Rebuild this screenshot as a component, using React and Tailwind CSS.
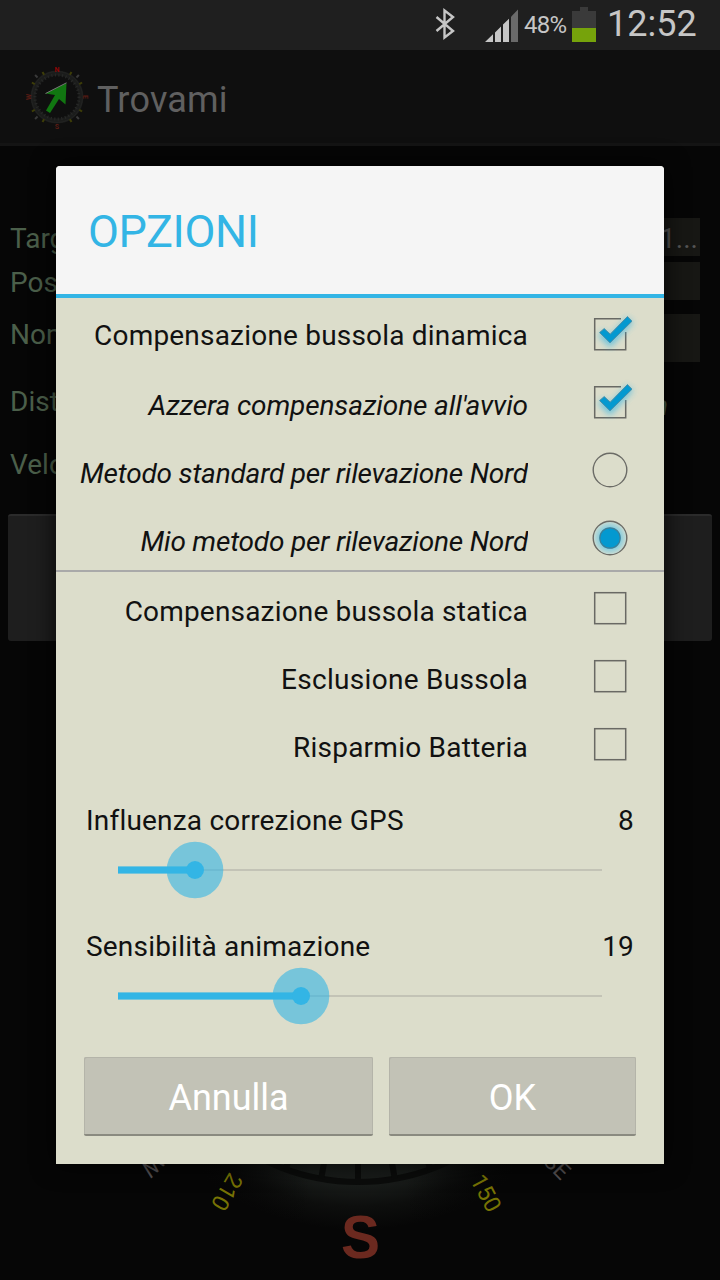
const fields = [
    { label: 'Target', row: 'h-[38px] mb-[6px]', box: 'h-[38px]', value: '1...' },
    { label: 'Posizione', row: 'h-[38px] mb-[14px]', box: 'h-[38px]', value: '' },
    { label: 'Nome', row: 'h-[48px]', box: 'h-[48px]', value: '' },
];

const dynamicOptions = [
    { label: 'Compensazione bussola dinamica', type: 'check', on: true, text: 'pt-[4px] tracking-[0.2px]' },
    { label: "Azzera compensazione all'avvio", type: 'check', on: true, text: 'pt-[8px] italic tracking-[-0.12px]' },
    { label: 'Metodo standard per rilevazione Nord', type: 'radio', on: false, text: 'pt-[8px] italic tracking-[-0.19px]' },
    { label: 'Mio metodo per rilevazione Nord', type: 'radio', on: true, text: 'pt-[8px] italic tracking-[-0.2px]' },
];

const staticOptions = [
    { label: 'Compensazione bussola statica', type: 'check', on: false, text: 'pt-[8px] tracking-[0.18px]' },
    { label: 'Esclusione Bussola', type: 'check', on: false, text: 'pt-[8px] tracking-[0.3px]' },
    { label: 'Risparmio Batteria', type: 'check', on: false, text: 'pt-[8px] tracking-[0.25px]' },
];

function CheckIcon({ on }) {
    return (
        <svg width="60" height="60" viewBox="0 0 60 60" className="block">
            <defs>
                <filter id="checkGlow" x="-50%" y="-50%" width="200%" height="200%">
                    <feGaussianBlur stdDeviation="3" />
                </filter>
            </defs>
            {on ? (
                <>
                    <path d="M41 14.7H14.7v31h31V28" fill="none" stroke="#696964" strokeWidth="1.5" />
                    <path d="M21 29l9 9 20-22" fill="none" stroke="#33b5e5" strokeWidth="8" opacity=".65" filter="url(#checkGlow)" />
                    <path d="M19.6 28.6l4.6-4 6 5.6 17.2-17.6 4.6 4.6L30 38.8z" fill="#0499d0" stroke="#4c8fa8" strokeWidth="1" />
                </>
            ) : (
                <rect x="14.7" y="14.7" width="31" height="31" fill="none" stroke="#696964" strokeWidth="1.5" />
            )}
        </svg>
    );
}

function RadioIcon({ on }) {
    return (
        <svg width="60" height="60" viewBox="0 0 60 60" className="block">
            <defs>
                <radialGradient id="radioGlow">
                    <stop offset=".55" stopColor="#7dcbe0" />
                    <stop offset="1" stopColor="#cfdcd0" />
                </radialGradient>
            </defs>
            {on && <circle cx="30" cy="30" r="17" fill="url(#radioGlow)" />}
            <circle cx="30" cy="30" r="16.8" fill="none" stroke="#6b6b66" strokeWidth="1.4" />
            {on && <circle cx="30" cy="30" r="10.2" fill="#0499d0" stroke="#3c7f98" strokeWidth="1.2" />}
        </svg>
    );
}

function OptionRow({ option }) {
    return (
        <div className="flex h-[68px] items-center">
            <div className={`w-[472px] overflow-hidden text-right whitespace-nowrap ${option.text}`}>{option.label}</div>
            <div className="ml-[52px]">
                {option.type === 'check' ? <CheckIcon on={option.on} /> : <RadioIcon on={option.on} />}
            </div>
        </div>
    );
}

function SliderBlock({ label, value, fill }) {
    return (
        <div className="h-[126px]">
            <div className="flex h-[40px] items-center justify-between pt-[2px] pr-[30px] pl-[30px] tracking-[0.2px]">
                <span>{label}</span>
                <span>{value}</span>
            </div>
            <svg width="608" height="60" viewBox="0 0 608 60" className="block">
                <rect x="62" y="29" width="484" height="2" fill="#c3c3b6" />
                <circle cx={fill} cy="30" r="28.3" fill="#33b5e5" opacity=".6" />
                <rect x="62" y="26" width={fill - 62} height="8" fill="#33b5e5" opacity=".6" />
                <rect x="62" y="27" width={fill - 62} height="6" fill="#33b5e5" />
                <circle cx={fill} cy="30" r="9" fill="#33b5e5" />
            </svg>
        </div>
    );
}

function StatusBar() {
    return (
        <div className="flex h-[50px] items-start justify-end bg-[#1f1f1f] pr-[25px] text-[#c6c6c6]">
            <svg width="20" height="32" viewBox="0 0 20 32" className="mt-[8px] mr-[29px]">
                <path d="M1.500 9L18 23 9.500 29.500V2.500L18 9 1.500 23" fill="none" stroke="#c6c6c6" strokeWidth="2.4" />
            </svg>
            <svg width="34" height="34" viewBox="0 0 34 34" className="mt-[8px]">
                <path d="M1 34L9 26.3V34z M11 24.4L17 18.6V34H11z M19 16.6L25 10.8V34H19z" fill="#c6c6c6" />
                <path d="M27 8.8L34 1.5V34H27z" fill="#6a6a6a" />
            </svg>
            <span className="mt-[9px] ml-[6px] w-[48px] text-[24px] leading-[32px] tracking-[-0.7px]">48%</span>
            <svg width="24" height="36" viewBox="0 0 24 36" className="mt-[7px]">
                <path d="M8 0h8v4h8v17H0V4h8z" fill="#3a3a3a" />
                <rect y="21" width="24" height="14" fill="#76a30b" />
            </svg>
            <span className="ml-[11px] w-[88px] text-[36px] leading-[48px]">12:52</span>
        </div>
    );
}

function AppLogo() {
    const ticks = [30, 60, 120, 150, 210, 240, 300, 330];
    return (
        <svg width="64" height="70" viewBox="0 0 64 70" className="mt-[14px] ml-[25px] block">
            <circle cx="32" cy="33" r="24" fill="none" stroke="#1b1c1b" strokeWidth="5" />
            <circle cx="32" cy="33" r="22" fill="none" stroke="#262726" strokeWidth="3" strokeDasharray="1.2 2.4" />
            <circle cx="32" cy="33" r="25.5" fill="none" stroke="#222322" strokeWidth="1" />
            {ticks.map((t) => (
                <path key={t} d="M32 4v3.200" stroke="#3e3e08" strokeWidth="2" transform={`rotate(${t} 32 33)`} />
            ))}
            {[45, 135, 225, 315].map((t) => (
                <path key={t} d="M32 2v3.500" stroke="#3a3a3a" strokeWidth="2" transform={`rotate(${t} 32 33)`} />
            ))}
            <g fontFamily="Roboto, sans-serif" fontSize="7" fontWeight="700" textAnchor="middle" fill="#5c1c14">
                <text x="32" y="7.5" fill="#8c0606">N</text>
                <text x="32" y="65">S</text>
                <text transform="translate(58 33) rotate(90)">E</text>
                <text transform="translate(6 33) rotate(-90)">W</text>
            </g>
            <path d="M41.500 19L20.500 29.5 30 31 21 46.500 25 49 34 35 40.5 40.5z" fill="#117611" />
            <path d="M41.5 18.8L20.5 29.5" stroke="#777" strokeWidth="1" />
        </svg>
    );
}

// Bottom part of the compass rose, the rest stays behind the dialog
function Compass() {
    return (
        <svg width="720" height="160" viewBox="0 1120 720 160" className="block">
            <defs>
                <radialGradient id="ringGlow" gradientUnits="userSpaceOnUse" cx="358" cy="970" r="260">
                    <stop offset=".7" stopColor="#1b1e1c" />
                    <stop offset=".83" stopColor="#181b19" />
                    <stop offset=".91" stopColor="#0d0e0d" />
                    <stop offset="1" stopColor="#060606" />
                </radialGradient>
                <linearGradient id="sideFade" x1="200" x2="516" gradientUnits="userSpaceOnUse">
                    <stop offset="0" stopColor="#060606" />
                    <stop offset=".35" stopColor="#060606" stopOpacity="0" />
                    <stop offset=".65" stopColor="#060606" stopOpacity="0" />
                    <stop offset="1" stopColor="#060606" />
                </linearGradient>
            </defs>
            <circle cx="358" cy="970" r="260" fill="url(#ringGlow)" />
            <rect x="90" y="1120" width="540" height="160" fill="url(#sideFade)" />
            <circle cx="358" cy="970" r="212" fill="none" stroke="#0b0c0b" strokeWidth="6" />
            {[-30, -20, -10, 0, 10, 20, 30].map((a) => (
                <path key={a} d="M358 1140V1182" stroke="#0b0c0b" strokeWidth="6" transform={`rotate(${a} 358 970)`} />
            ))}
            <g fontFamily="Roboto, sans-serif" fontSize="23" textAnchor="middle">
                <text transform="translate(227 1192) rotate(120)" y="8" fill="#777304">210</text>
                <text transform="translate(486 1193) rotate(62)" y="8" fill="#777304">150</text>
                <text transform="translate(557 1166) rotate(45)" y="8" fill="#565254">SE</text>
                <text transform="translate(157 1161) rotate(135)" y="8" fill="#565254">SW</text>
            </g>
            <text x="360.500" y="1258" fontFamily="Liberation Sans, sans-serif" fontSize="62" fontWeight="700" textAnchor="middle" fill="#6b291f" textLength="39" lengthAdjust="spacingAndGlyphs">S</text>
        </svg>
    );
}

export default function App() {
    return (
        <div className="relative h-[1280px] w-[720px] overflow-hidden bg-[#060606] font-['Roboto',sans-serif]">
            <div className="flex h-full flex-col">
                <StatusBar />
                <div className="flex h-[96px] border-b-[3px] border-[#141414] bg-[#0f0f0f]">
                    <AppLogo />
                    <h1 className="mt-[29px] ml-[8px] text-[36px] leading-[42px] tracking-[0.2px] text-[#606060]">Trovami</h1>
                </div>

                <div className="mt-[72px] h-[296px] pr-[20px] pl-[10px] text-[28px] leading-[36px] text-[#4b5f4a]">
                    {fields.map((f) => (
                        <div key={f.label} className={`flex justify-between ${f.row}`}>
                            <span className="w-[50px] overflow-hidden pt-[3px]">{f.label}</span>
                            <div className={`w-[500px] bg-[#171714] pt-[3px] pr-[2px] text-right text-[#555] ${f.box}`}>{f.value}</div>
                        </div>
                    ))}
                    <div className="mt-[22px] flex h-[63px] justify-between">
                        <span className="w-[50px] overflow-hidden">Distanza</span>
                        <span className="mt-[4px] mr-[32px] italic">m</span>
                    </div>
                    <div className="w-[50px] overflow-hidden">Velocità</div>
                </div>
                <div className="mx-[8px] h-[127px] rounded-[3px] border-t-2 border-[#2b2b2b] bg-[#1e1e1e]" />
                <div className="mt-auto">
                    <Compass />
                </div>
            </div>

            {/* Opzioni */}
            <div className="absolute top-[166px] left-[56px] h-[998px] w-[608px] overflow-hidden rounded-t-[4px] bg-[#dcddcb] text-[28px] leading-[36px] text-[#111] shadow-[0_0_24px_rgba(0,0,0,0.8)] [font-variant-ligatures:none]">
                <div className="flex h-[132px] items-center border-b-4 border-[#33b5e5] bg-[#f5f5f5] pt-[4px] pl-[32px]">
                    <h2 className="text-[45px] leading-[52px] tracking-[-0.4px] text-[#33b5e5]">OPZIONI</h2>
                </div>
                <div className="h-[274px] border-b-2 border-[#a9a9a9] pt-[2px]">
                    {dynamicOptions.map((o) => (
                        <OptionRow key={o.label} option={o} />
                    ))}
                </div>
                <div className="pt-[2px]">
                    {staticOptions.map((o) => (
                        <OptionRow key={o.label} option={o} />
                    ))}
                </div>
                <div className="pt-[22px]">
                    <SliderBlock label="Influenza correzione GPS" value="8" fill={139} />
                    <SliderBlock label="Sensibilità animazione" value="19" fill={245} />
                </div>
                <div className="flex gap-[16px] px-[28px] pt-[5px] text-[36px] text-white">
                    <button className="h-[79px] w-[289px] rounded-[2px] border-b-2 border-[#8a8a80] bg-[#c2c2b6] pt-[4px] shadow-[inset_1px_1px_0_#b4b4a9,inset_-1px_0_0_#b4b4a9]">Annulla</button>
                    <button className="h-[79px] w-[247px] rounded-[2px] border-b-2 border-[#8a8a80] bg-[#c2c2b6] pt-[4px] shadow-[inset_1px_1px_0_#b4b4a9,inset_-1px_0_0_#b4b4a9]">OK</button>
                </div>
            </div>
        </div>
    );
}
